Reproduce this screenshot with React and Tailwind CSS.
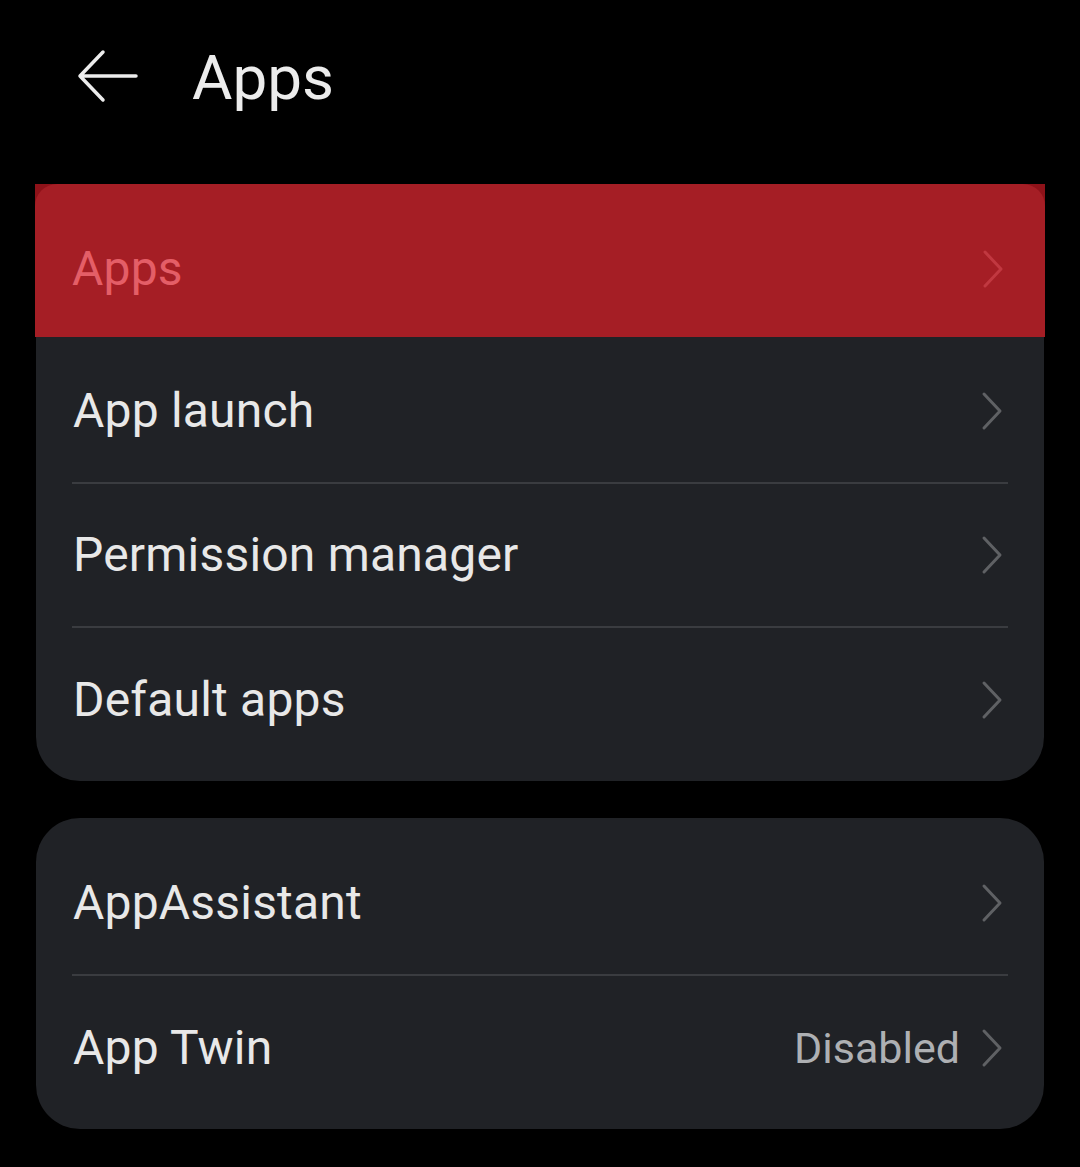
import React from 'react';

const Chevron = ({ className = '' }) => (
  <svg width="24" height="40" viewBox="0 0 24 40" fill="none" className={className}>
    <path d="M4 3 L20 20 L4 37" stroke="currentColor" strokeWidth="3" strokeLinecap="round" strokeLinejoin="round" />
  </svg>
);

const BackArrow = () => (
  <svg width="64" height="58" viewBox="0 0 64 58" fill="none" className="text-[#ececec]">
    <path d="M60 27 H4 M27 3 L4 27 L27 51" stroke="currentColor" strokeWidth="3.5" strokeLinecap="round" strokeLinejoin="round" />
  </svg>
);

const Row = ({ label, value, divider = true }) => (
  <div>
    <div className={`${divider ? 'h-[142px]' : 'h-[144px]'} flex items-center pl-[37px] pr-[40px]`}>
      <span className="flex-1 text-[48px] text-[#e8e8e8] tracking-[0.2px]">{label}</span>
      {value && <span className="mr-[20px] text-[43px] text-[#aeb0b3]">{value}</span>}
      <Chevron className="text-[#5f6164]" />
    </div>
    {divider && <div className="mx-[36px] h-[2px] bg-[#3a3c40]" />}
  </div>
);

export default function App() {
  const mainItems = ['App launch', 'Permission manager', 'Default apps'];

  return (
    <div className="min-h-screen bg-black font-['Roboto','Liberation_Sans',sans-serif]">
      {/* Header */}
      <div className="h-[156px] flex items-center pl-[76px]">
        <BackArrow />
        <h1 className="ml-[52px] text-[62px] text-[#ececec] leading-none">Apps</h1>
      </div>

      {/* First group */}
      <div className="mt-[28px] mx-[36px] relative rounded-[44px] bg-[#202226] pt-[10px] pb-[9px]">
        {/* highlighted row overlay */}
        <div className="absolute -left-px -right-px top-0 h-[153px] bg-[#8e1219]">
          <div className="h-full rounded-t-[22px] bg-[#a51e25] flex items-center pt-[16px] pl-[37px] pr-[40px]">
            <span className="flex-1 text-[48px] text-[#e45e67] tracking-[0.2px]">Apps</span>
            <Chevron className="text-[#c13840]" />
          </div>
        </div>
        <div className="h-[146px]" />
        {mainItems.map((item, i) => (
          <Row key={item} label={item} divider={i < mainItems.length - 1} />
        ))}
      </div>

      {/* Second group */}
      <div className="mt-[37px] mx-[36px] rounded-[44px] bg-[#202226] pt-[14px] pb-[9px]">
        <Row label="AppAssistant" />
        <Row label="App Twin" value="Disabled" divider={false} />
      </div>
    </div>
  );
}
